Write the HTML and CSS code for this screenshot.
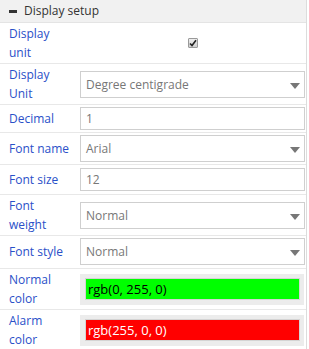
FILE: index.html
```html
<!DOCTYPE html>
<html>
<head>
<meta charset="utf-8">
<link rel="stylesheet" href="styles.css">
</head>
<body>
<div class="panel">
  <div class="panel-head"><span class="minus"></span><span class="title">Display setup</span></div>
  <div class="row r-two">
    <div class="label">Display<br>unit</div>
    <div class="field center"><span class="check"><svg width="8" height="8" viewBox="0 0 8 8"><path d="M1 4.5 L3 6.5 L7 1.2" fill="none" stroke="#222" stroke-width="1.6"/></svg></span></div>
  </div>
  <div class="row r-two">
    <div class="label">Display<br>Unit</div>
    <div class="field"><div class="select">Degree centigrade<span class="arrow"></span></div></div>
  </div>
  <div class="row">
    <div class="label">Decimal</div>
    <div class="field"><div class="input">1</div></div>
  </div>
  <div class="row">
    <div class="label">Font name</div>
    <div class="field"><div class="select">Arial<span class="arrow"></span></div></div>
  </div>
  <div class="row r-size">
    <div class="label">Font size</div>
    <div class="field"><div class="input">12</div></div>
  </div>
  <div class="row r-two">
    <div class="label">Font<br>weight</div>
    <div class="field"><div class="select">Normal<span class="arrow"></span></div></div>
  </div>
  <div class="row r-style">
    <div class="label">Font style</div>
    <div class="field"><div class="select">Normal<span class="arrow"></span></div></div>
  </div>
  <div class="row r-two">
    <div class="label">Normal<br>color</div>
    <div class="field"><div class="color-box"><div class="swatch green">rgb(0, 255, 0)</div></div></div>
  </div>
  <div class="row r-two">
    <div class="label">Alarm<br>color</div>
    <div class="field"><div class="color-box"><div class="swatch red">rgb(255, 0, 0)</div></div></div>
  </div>
</div>
</body>
</html>
```

FILE: styles.css
```css
* { box-sizing: border-box; }
html, body { margin: 0; padding: 0; background: #fff; }
body { font-family: "Open Sans", "Liberation Sans", sans-serif; }
.panel {
  width: 307px;
  border-right: 1px solid #dcdcdc;
}
.panel-head {
  height: 23px;
  background: #f1f1f1;
  border-bottom: 1px solid #e4e4e4;
  display: flex;
  align-items: center;
  padding-left: 9px;
}
.minus {
  width: 8px;
  height: 3px;
  background: #333;
  margin-right: 7px;
}
.title {
  font-size: 12px;
  color: #333;
  line-height: 22px;
}
.row {
  display: flex;
  align-items: center;
  border-bottom: 1px solid #e8e8e8;
  padding: 2px 0;
}
.r-two { padding: 1px 0; }
.r-size { padding: 3px 0; }
.r-style { padding: 2px 0 3px; }
.label {
  width: 80px;
  padding-left: 9px;
  color: #2a50c8;
  font-size: 12px;
  line-height: 19px;
}
.field {
  flex: 1;
  padding-right: 1px;
}
.field.center {
  display: flex;
  justify-content: center;
  padding-right: 0;
}
.check {
  width: 10px;
  height: 10px;
  border: 1px solid #9a9a9a;
  border-radius: 1px;
  background: linear-gradient(#eee, #cfcfcf);
  display: flex;
  align-items: center;
  justify-content: center;
}
.check svg { display: block; }
.input, .select {
  border: 1px solid #cfcfcf;
  background: #fff;
  color: #777;
  font-size: 12px;
  padding-left: 5px;
  display: flex;
  align-items: center;
}
.input { height: 23px; }
.select { height: 27px; position: relative; }
.arrow {
  position: absolute;
  right: 4px;
  top: 11px;
  width: 0;
  height: 0;
  border-left: 5px solid transparent;
  border-right: 5px solid transparent;
  border-top: 6px solid #777;
}
.color-box {
  background: #ececec;
  padding: 4px 4px 5px 5px;
  margin-right: 1px;
}
.swatch {
  height: 22px;
  border: 1px solid #d4d4d4;
  font-size: 13px;
  padding-left: 2px;
  display: flex;
  align-items: center;
}
.green { background: #00ff00; color: #000; }
.red { background: #ff0000; color: #fff; }
```
